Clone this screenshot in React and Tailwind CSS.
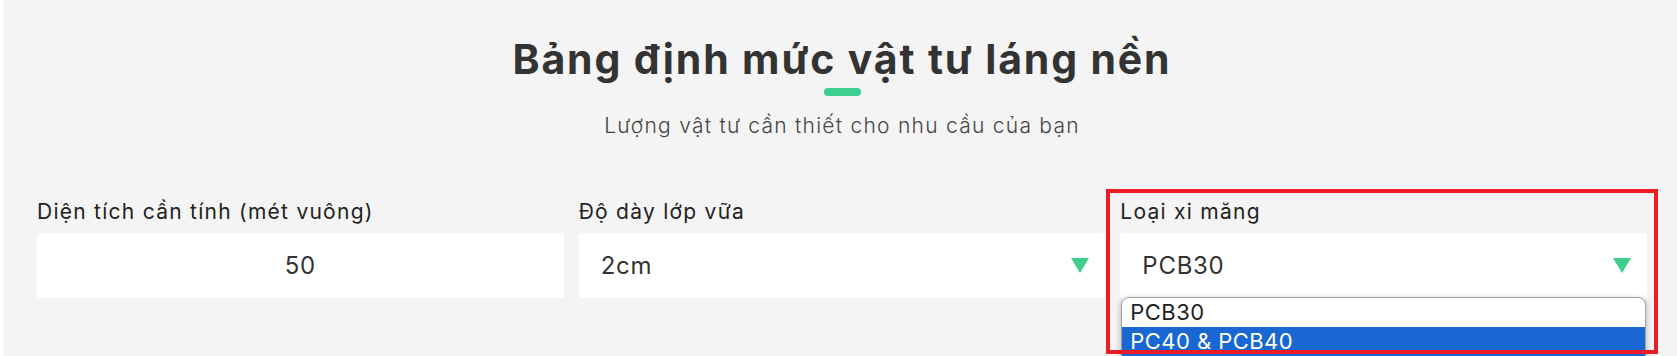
function Arrow() {
  return (
    <svg width="18" height="15" viewBox="0 0 18 15" className="shrink-0">
      <path d="M0 0h18L9 15z" fill="#3ecf8e" />
    </svg>
  );
}

function Field({ label, children }) {
  return (
    <div>
      <div className="mb-[9px] text-[21px] leading-[24px] tracking-[0.06em] text-[#222]">{label}</div>
      {children}
    </div>
  );
}

export default function App() {
  return (
    <div className="h-[356px] overflow-hidden border-l-[3px] border-white bg-[#f4f4f4] pl-[34px] pr-[30px] font-['Inter',sans-serif] text-[#333]">
      <h1 className="pt-[35px] text-center text-[41px] font-bold leading-[48px] tracking-[0.045em]">
        Bảng định mức vật tư láng nền
      </h1>
      <div className="mx-auto mt-[5px] h-[8px] w-[37px] rounded-full bg-[#3ecf8e]" />
      <p className="mt-[16px] text-center text-[21px] font-light leading-[28px] tracking-[0.06em] text-[#444]">
        Lượng vật tư cần thiết cho nhu cầu của bạn
      </p>

      <div className="mt-[60px] grid grid-cols-3 gap-x-[15px]">
        <Field label="Diện tích cần tính (mét vuông)">
          <div className="flex h-[65px] items-center justify-center rounded-[3px] bg-white text-[24px] tracking-[0.03em]">
            50
          </div>
        </Field>

        <Field label="Độ dày lớp vữa">
          <div className="flex h-[65px] items-center justify-between rounded-[3px] bg-white pl-[22px] pr-[16px] text-[24px] tracking-[0.03em]">
            <span>2cm</span>
            <Arrow />
          </div>
        </Field>

        <div className="relative">
          <Field label="Loại xi măng">
            <div className="flex h-[65px] items-center justify-between rounded-[3px] bg-white pl-[22px] pr-[16px] text-[24px] tracking-[0.03em]">
              <span>PCB30</span>
              <Arrow />
            </div>
          </Field>

          {/* native select popup */}
          <div className="absolute left-[1px] right-[1px] top-[97px] z-10 overflow-hidden rounded-[8px] border border-[#a3a3a3] bg-white text-[22px] leading-[29px] tracking-[0.02em] text-[#222] shadow-[0_2px_6px_rgba(0,0,0,0.3)]">
            <div className="pl-[8px]">PCB30</div>
            <div className="bg-[#1967d2] pl-[8px] text-white">PC40 &amp; PCB40</div>
            <div className="pl-[8px]">PC50</div>
          </div>

          {/* highlight box */}
          <div className="pointer-events-none absolute -left-[14px] -right-[11px] -top-[11px] -bottom-[56px] z-20 border-[4px] border-[#ec1c24]" />
        </div>
      </div>
    </div>
  );
}
